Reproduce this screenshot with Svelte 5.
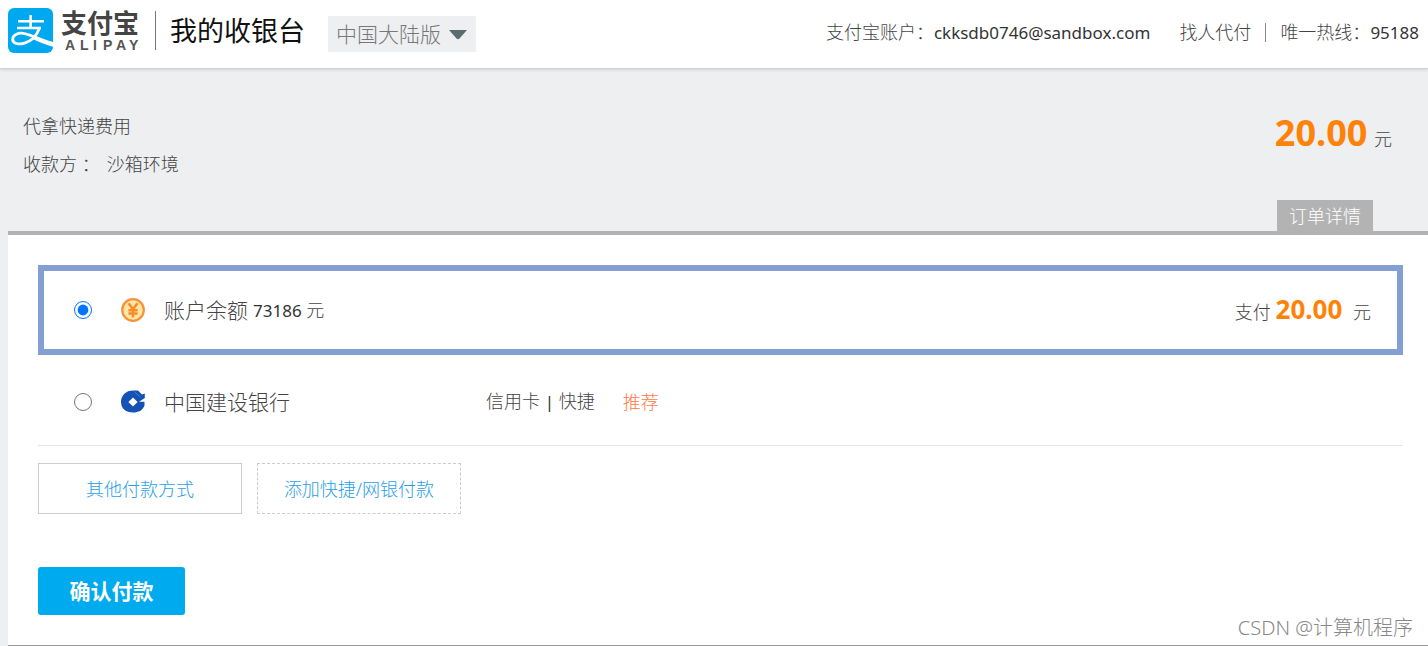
<script>
  const account = 'ckksdb0746@sandbox.com';
  const price = '20.00';

  let region = $state('cn');
  let method = $state('balance');
</script>

<header>
  <a class="logo" href="/" aria-label="支付宝 ALIPAY">
    <svg width="134" height="48" viewBox="0 0 134 48">
      <rect width="45" height="45" rx="6" fill="#00a9ef" />
      <g fill="none" stroke="#fff">
        <path d="M10 13.2H36M22.6 7V20M9 20H33" stroke-width="2.6" />
        <path d="M31.5 20C29 27 23.5 33 16.5 35.2C10.5 37 4.6 35.5 4.7 31.2C4.8 26.6 10.5 24.3 16.500 25.600C25 27.500 33 32.300 45 35.600" stroke-width="2.8" />
      </g>
      <path d="M25 28.800C32 31.800 38 33 45 34V38.800C37 36.500 30 33.500 23.400 30.500Z" fill="#fff" />
      <text class="mark-cn" x="53" y="25">支付宝</text>
      <text class="mark-en" x="57 72 85 95 108 121" y="42">ALIPAY</text>
    </svg>
  </a>
  <h1>我的收银台</h1>
  <div class="region">
    <select aria-label="版本" bind:value={region}>
      <option value="cn">中国大陆版</option>
    </select>
    <svg width="18" height="10" viewBox="0 0 18 10"><path d="M0 0H18L10.5 8.5Q9 10 7.5 8.5Z" fill="#5c6b70" /></svg>
  </div>
  <div class="links">
    <span class="account">支付宝账户：<b>{account}</b></span>
    <a href="/peerpay">找人代付</a>
    <span class="hotline">唯一热线：<b>95188</b></span>
  </div>
</header>

<main>
  <section class="order">
    <div class="summary">
      <div>
        <p>代拿快递费用</p>
        <p class="payee"><span>收款方 ：</span><span>沙箱环境</span></p>
      </div>
      <p class="total"><strong>{price}</strong> 元</p>
    </div>
    <button class="detail" type="button">订单详情</button>
  </section>

  <form class="cashier">
    <label class="method" class:selected={method === 'balance'}>
      <input type="radio" name="method" value="balance" bind:group={method}>
      <svg width="24" height="24" viewBox="0 0 24 24">
        <circle cx="12" cy="12" r="10.8" fill="#ffe6a3" stroke="#f8923a" stroke-width="2.2" />
        <path d="M7.6 5.2L12 11.4L16.4 5.2M12 11V19.5M7.4 12.2H16.6M7.4 15.6H16.6" fill="none" stroke="#f98b2b" stroke-width="2.5" />
      </svg>
      <span class="name">账户余额</span>
      <span class="balance"><b>73186</b> 元</span>
      <span class="pay">支付 <strong>{price}</strong> 元</span>
    </label>

    <label class="method" class:selected={method === 'ccb'}>
      <input type="radio" name="method" value="ccb" bind:group={method}>
      <svg width="24" height="24" viewBox="0 0 24 24">
        <path d="M13 0.5C5.5 0 0 5 0 12C0 18.500 5 22.500 12 22.500C17.500 22.500 21.500 20.500 23.500 15.500V11.800H18L23.800 8V3.500L21 4.500L17 0.500Z" fill="#1552b5" />
        <path d="M12 7.400L16.600 12L12 16.600L7.400 12Z" fill="#fff" />
        <path d="M13.500 2L19.500 7" stroke="#5c88d0" stroke-width="0.800" />
      </svg>
      <span class="name bank">中国建设银行</span>
      <span class="kind">信用卡 <b>|</b> 快捷</span>
      <span class="tip">推荐</span>
    </label>

    <div class="more">
      <button type="button">其他付款方式</button>
      <button class="dashed" type="button">添加快捷/网银付款</button>
    </div>

    <button class="confirm" type="button">确认付款</button>
  </form>
  <span class="watermark">CSDN @计算机程序</span>
</main>

<style>
  :global(body) {
    background: #edeff1;
    color: #444;
    font: 300 18px/24px "Noto Sans", "Noto Sans CJK SC", sans-serif;
  }

  h1, p {
    margin: 0;
    font-weight: inherit;
  }

  a {
    color: inherit;
    text-decoration: none;
  }

  b {
    color: #333;
    font-size: 17px;
    font-weight: 400;
  }

  button, select {
    font: inherit;
    cursor: pointer;
  }

  strong {
    color: #ff8208;
    font-weight: 700;
  }

  svg {
    display: block;
    flex: none;
  }

  header {
    display: flex;
    align-items: center;
    box-sizing: border-box;
    height: 69px;
    padding: 0 9px 0 8px;
    border-bottom: 1px solid #d0d2d3;
    background: #fff;
    box-shadow: 0 1px 3px rgba(0, 0, 0, 0.12);
  }

  .logo {
    margin-bottom: 4px;
  }

  .mark-cn {
    fill: #444;
    font: 700 26px "Liberation Sans", "Noto Sans CJK SC", sans-serif;
  }

  .mark-en {
    fill: #555;
    font: 700 14px "Liberation Sans", sans-serif;
  }

  h1 {
    margin: 0 23px 8px 13px;
    padding-left: 14px;
    border-left: 1px solid #777;
    color: #111;
    font-size: 27px;
    font-weight: 400;
    line-height: 39px;
    white-space: nowrap;
  }

  .region {
    position: relative;
  }

  .region select {
    width: 148px;
    height: 36px;
    padding: 0 8px;
    border: 0;
    border-radius: 0;
    appearance: none;
    background: #edeff1;
    color: #777;
    font-size: 21px;
  }

  .region svg {
    position: absolute;
    top: 14px;
    right: 9px;
    pointer-events: none;
  }

  .links {
    display: flex;
    margin: 0 0 4px auto;
    line-height: 18px;
    white-space: nowrap;
  }

  .account {
    margin-right: 29px;
  }

  .hotline {
    margin-left: 14px;
    padding-left: 14px;
    border-left: 1px solid #888;
  }

  main {
    position: relative;
  }

  .order {
    display: flex;
    flex-direction: column;
    box-sizing: border-box;
    height: 162px;
    padding: 38px 36px 0 23px;
  }

  .summary {
    display: flex;
    justify-content: space-between;
    line-height: 38px;
  }

  .payee {
    display: flex;
    gap: 7px;
  }

  .total {
    line-height: 52px;
  }

  .total strong {
    margin-right: 2px;
    font-size: 36px;
  }

  .detail {
    align-self: flex-end;
    margin: auto 19px 0 0;
    padding: 4px 12px 3px;
    border: 0;
    background: #b3b3b3;
    color: #fff;
  }

  .cashier {
    margin-left: 8px;
    padding: 30px 25px 30px 30px;
    border-top: 4px solid #b3b3b3;
    border-bottom: 1px solid #999;
    background: #fff;
  }

  .method {
    display: flex;
    align-items: center;
    box-sizing: border-box;
    height: 91px;
    padding: 3px 31px 0 36px;
    border-bottom: 1px solid #e5e5e5;
  }

  .method.selected {
    height: 90px;
    padding: 0 26px 0 30px;
    border: 6px solid #849fd2;
  }

  .method input {
    width: 18px;
    height: 18px;
    margin: 0 29px 0 0;
  }

  .name {
    margin-left: 19px;
    font-size: 21px;
  }

  .bank {
    width: 322px;
  }

  .balance {
    margin-left: 5px;
  }

  .pay {
    margin-left: auto;
  }

  .pay strong {
    margin-right: 6px;
    font-size: 26px;
  }

  .tip {
    margin-left: 28px;
    color: #ff7a45;
  }

  .more {
    display: flex;
    gap: 15px;
    margin: 17px 0 53px;
  }

  .more button {
    width: 204px;
    height: 51px;
    padding: 0;
    border: 1px solid #ccc;
    background: #fff;
    color: #2a9ee8;
  }

  .more .dashed {
    border-style: dashed;
  }

  .confirm {
    display: block;
    width: 147px;
    height: 48px;
    padding: 0;
    border: 0;
    border-radius: 3px;
    background: #00aaee;
    color: #fff;
    font-size: 21px;
    font-weight: 700;
  }

  .watermark {
    position: absolute;
    right: 15px;
    bottom: 6px;
    color: #888;
    font-size: 20px;
  }
</style>
